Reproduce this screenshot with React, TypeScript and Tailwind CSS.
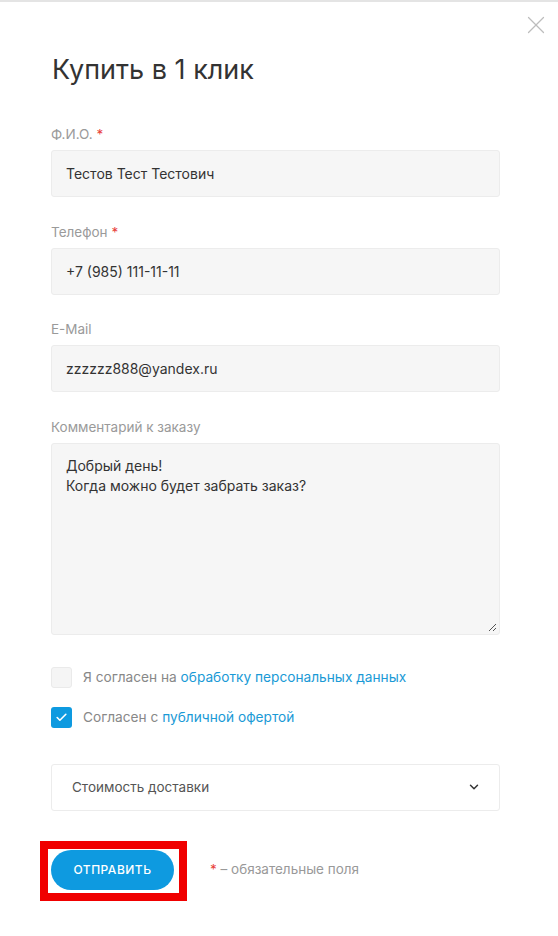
import { Check, ChevronDown, X } from "lucide-react";

function Field({
  label,
  required,
  value,
}: {
  label: string;
  required?: boolean;
  value: string;
}) {
  return (
    <div className="mb-[25.5px]">
      <div className="mb-[7px] text-[13.5px] leading-[18px] text-[#9a9a9a]">
        {label}
        {required && <span className="ml-1 text-[#e8413a]">*</span>}
      </div>
      <div className="flex h-[47px] items-center rounded-[3px] border border-[#ececec] bg-[#f6f6f6] px-[14px] text-[14px] text-[#333]">
        {value}
      </div>
    </div>
  );
}

export default function App() {
  return (
    <div
      className="relative min-h-[936px] w-[558px] border-t-2 border-[#e4e4e4] bg-white"
      style={{ fontFamily: "Inter, 'Noto Sans', sans-serif" }}
    >
      <button className="absolute right-[7px] top-[8px] text-[#bdbdbd]">
        <X className="h-[30px] w-[30px]" strokeWidth={1} />
      </button>

      <div className="w-[500px] pl-[51px] pt-[52px]">
        <h1 className="mb-[39px] pl-[1px] text-[27px] leading-[32px] font-normal text-[#333]">
          Купить в 1 клик
        </h1>

        <Field label="Ф.И.О." required value="Тестов Тест Тестович" />
        <Field label="Телефон" required value="+7 (985) 111-11-11" />
        <Field label="E-Mail" value="zzzzzz888@yandex.ru" />

        <div className="mb-[32px]">
          <div className="mb-[7px] text-[13.5px] leading-[18px] text-[#9a9a9a]">
            Комментарий к заказу
          </div>
          <div className="relative h-[192px] rounded-[3px] border border-[#ececec] bg-[#f6f6f6] px-[14px] pt-[12px] text-[14px] leading-[20px] text-[#333]">
            <div>Добрый день!</div>
            <div>Когда можно будет забрать заказ?</div>
            <svg
              className="absolute bottom-[2px] right-[2px]"
              width="9"
              height="9"
              viewBox="0 0 9 9"
            >
              <path d="M8 1 L1 8 M8 5 L5 8" stroke="#555" strokeWidth="1" />
            </svg>
          </div>
        </div>

        <div className="mb-[19px] flex items-center gap-[11px]">
          <span className="h-[21px] w-[21px] shrink-0 rounded-[3px] border border-[#eaeaea] bg-[#f5f5f5]" />
          <span className="text-[13.7px] text-[#888]">
            Я согласен на{" "}
            <span className="text-[#1a9ad6]">обработку персональных данных</span>
          </span>
        </div>
        <div className="mb-[36px] flex items-center gap-[11px]">
          <span className="flex h-[21px] w-[21px] shrink-0 items-center justify-center rounded-[3px] bg-[#0e9ae0]">
            <Check className="h-[13px] w-[13px] text-white" strokeWidth={3} />
          </span>
          <span className="text-[13.7px] text-[#888]">
            Согласен с{" "}
            <span className="text-[#1a9ad6]">публичной офертой</span>
          </span>
        </div>

        <div className="mb-[39px] flex h-[47px] items-center justify-between rounded-[3px] border border-[#ececec] bg-white pl-[20px] pr-[18px] text-[13.5px] text-[#555]">
          Стоимость доставки
          <ChevronDown className="h-[14px] w-[14px] text-[#333]" strokeWidth={2.5} />
        </div>

        <div className="flex items-center gap-[36px]">
          <div className="relative">
            <button className="h-[40px] w-[123px] rounded-full bg-[#0e9ae0] text-[12px] font-medium tracking-[0.5px] text-white">
              ОТПРАВИТЬ
            </button>
            <div className="pointer-events-none absolute -bottom-[11px] -left-[11px] -right-[13px] -top-[9px] border-[8px] border-[#f00000]" />
          </div>
          <div className="text-[13.5px] text-[#999]">
            <span className="text-[#e8413a]">*</span> – обязательные поля
          </div>
        </div>
      </div>
    </div>
  );
}
